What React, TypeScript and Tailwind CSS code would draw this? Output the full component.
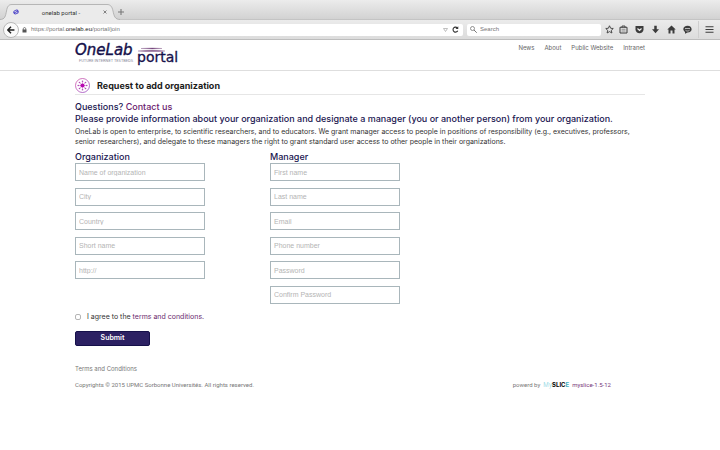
import type { ReactNode } from "react";

function Icon({ children, label }: { children: ReactNode; label: string }) {
  return (
    <button type="button" aria-label={label} className="flex shrink-0 items-center justify-center text-[#3c3c3c]">
      <svg viewBox="0 0 18 18" className="size-[9px]" fill="none" stroke="currentColor" strokeWidth="2">
        {children}
      </svg>
    </button>
  );
}

function BrowserChrome() {
  return (
    <div className="h-10 border-b border-[#bdbdbd] bg-[#e2e2e2] font-['Liberation_Sans',Arial,sans-serif] text-[6px] text-[#333]">
      <div className="flex h-5 items-end border-b border-[#c4c4c4] bg-linear-to-b from-[#ececec] to-[#d2d2d2]">
        <div className="relative -mb-px h-4 w-[120px]">
          <svg viewBox="0 0 120 16" className="absolute inset-0 h-4 w-[120px]">
            <path d="M0 15.5C5 15.5 5.500 12 6.500 7C7.300 2 9 .5 12 .5H107C110 .5 112 2 113 7C114 12 115 15.500 120 15.500V16H0Z" fill="#ebebeb" />
            <path d="M0 15.500C5 15.500 5.500 12 6.500 7C7.300 2 9 .5 12 .5H107C110 .5 112 2 113 7C114 12 115 15.500 120 15.500" fill="none" stroke="#a8a8a8" strokeWidth=".8" />
          </svg>
          <div className="relative flex h-4 items-center pr-[13px] pl-[13px]">
            <svg viewBox="0 0 12 12" className="size-[6px]" fill="none" stroke="#4b43c8" strokeWidth="2">
              <ellipse cx="6" cy="6" rx="4.500" ry="3.500" transform="rotate(-20 6 6)" />
              <path d="M2 8L10 4" />
            </svg>
            <span className="flex-1 text-center font-[Roboto,sans-serif]">onelab portal -</span>
            <button type="button" aria-label="Close tab">
              <svg viewBox="0 0 8 8" className="size-[4px]" stroke="#777" strokeWidth="1.800">
                <path d="M1 1L7 7M7 1L1 7" />
              </svg>
            </button>
          </div>
        </div>
        <button type="button" aria-label="New tab" className="-ml-0.5 mb-1">
          <svg viewBox="0 0 10 10" className="size-[6px]" stroke="#777" strokeWidth="1.800">
            <path d="M5 0V10M0 5H10" />
          </svg>
        </button>
      </div>
      <div className="flex h-[19px] items-center bg-linear-to-b from-[#ebebeb] to-[#dcdcdc] pr-[6px] pl-[3px]">
        <button type="button" aria-label="Back" className="relative z-10 flex size-4 shrink-0 items-center justify-center rounded-full border border-[#b8b8b8] bg-[#fafafa]">
          <svg viewBox="0 0 14 14" className="size-2" fill="none" stroke="#222" strokeWidth="2.500">
            <path d="M13 7H2M7 1.500L1.500 7L7 12.500" />
          </svg>
        </button>
        <div className="-ml-1 flex h-3 min-w-0 flex-1 items-center rounded-r-xs bg-white pr-1 pl-[7px]">
          <svg viewBox="0 0 10 12" className="h-[6px] w-[5px] shrink-0" fill="#555">
            <path d="M1 5H9V11H1Z" />
            <path d="M2.500 6V3.500C2.500 .3 7.500 .3 7.500 3.500V6" fill="none" stroke="#555" strokeWidth="1.500" />
          </svg>
          <div role="textbox" aria-label="Address" className="ml-1 flex-1 whitespace-nowrap text-[#777]">
            https://portal.<span className="text-[#222]">onelab.eu</span>/portal/join
          </div>
          <svg viewBox="0 0 10 8" className="h-1 w-[5px]" fill="none" stroke="#aaa" strokeWidth="1.500">
            <path d="M1 1H9L5 7Z" />
          </svg>
          <button type="button" aria-label="Reload" className="ml-1">
            <svg viewBox="0 0 14 14" className="size-[7px]" fill="none" stroke="#333" strokeWidth="2.200">
              <path d="M11.500 9.500A5 5 0 1 1 10.500 3.500" />
              <path d="M12.500 .5V6H7Z" fill="#333" stroke="none" />
            </svg>
          </button>
        </div>
        <div className="ml-1 flex h-3 w-[134px] shrink items-center rounded-xs bg-white pl-[3px]">
          <svg viewBox="0 0 14 14" className="size-[7px] shrink-0" fill="none" stroke="#777" strokeWidth="1.600">
            <circle cx="5" cy="5" r="4" />
            <path d="M8 8L13.500 13.500" strokeWidth="2" />
          </svg>
          <input aria-label="Search" placeholder="Search" className="ml-[3px] w-full min-w-0 outline-none placeholder:text-[#777]" />
        </div>
        <div className="ml-1 flex items-center gap-[7px]">
          <div className="flex gap-[5px]">
            <Icon label="Bookmark">
              <path d="M9 1.500L11.300 6.500L16.500 7L12.600 10.700L13.800 16L9 13.200L4.200 16L5.400 10.700L1.500 7L6.700 6.500Z" strokeWidth="1.800" />
            </Icon>
            <Icon label="Bookmarks list">
              <path d="M2 4.500H16V16H2Z" strokeWidth="2" />
              <path d="M6 5V2H12V5" strokeWidth="1.800" />
              <path d="M5 8.500H13M5 12H13" strokeWidth="1" />
            </Icon>
          </div>
          <Icon label="Pocket">
            <path d="M1 2H17V8.500C17 19 1 19 1 8.500Z" fill="currentColor" stroke="none" />
            <path d="M5 7L9 10.800L13 7" stroke="#eee" strokeWidth="2.400" />
          </Icon>
          <Icon label="Downloads">
            <path d="M6.500 1.500H11.500V8.500H16L9 16.500L2 8.500H6.500Z" fill="currentColor" stroke="none" />
          </Icon>
          <Icon label="Home">
            <path d="M9 1L17.500 9H15V17H11V11H7V17H3V9H.5Z" fill="currentColor" stroke="none" />
          </Icon>
          <Icon label="Chat">
            <path d="M9 1.500C20 1.500 20 15 9 15L4 17.500V14C-3 8 2 1.500 9 1.500Z" fill="currentColor" stroke="none" />
            <path d="M4 7H14M5 10.500C7 12.500 11 12.500 13 10.500" stroke="#ddd" strokeWidth="1.500" />
          </Icon>
          <div className="-ml-px border-l border-[#cfcfcf] py-1 pl-[6px]">
            <Icon label="Menu">
              <path d="M1 3.500H17M1 9H17M1 14.500H17" strokeWidth="2.200" />
            </Icon>
          </div>
        </div>
      </div>
    </div>
  );
}

function Logo() {
  return (
    <svg viewBox="0 0 106 27" className="h-[27px] w-[106px]" role="img" aria-label="OneLab portal">
      <text x="0" y="15" fontSize="15" fontStyle="italic" fill="#15104a" stroke="#15104a" strokeWidth=".4" fontFamily="DejaVu Sans, sans-serif">OneLab</text>
      <text x="4" y="22" fontSize="4" fill="#8a8a9a" fontFamily="Roboto, sans-serif">FUTURE INTERNET TESTBEDS</text>
      <text x="62" y="22" fontSize="14" fill="#15104a" stroke="#15104a" strokeWidth=".3" fontFamily="DejaVu Sans, sans-serif">portal</text>
      <path d="M66 8.500Q78 7.300 87 8.500Q78 9.300 66 8.500M63 11Q78 9.500 90 11Q78 12 63 11" fill="#76487f" stroke="#76487f" strokeWidth=".3" />
    </svg>
  );
}

function OrganizationIcon() {
  return (
    <svg viewBox="0 0 30 30" className="size-[15px]" fill="none">
      <defs>
        <linearGradient id="ring" x1="0" y1="0" x2="1" y2="1">
          <stop offset="0" stopColor="#d24aa0" />
          <stop offset="1" stopColor="#8a3ac0" />
        </linearGradient>
      </defs>
      <circle cx="15" cy="15" r="14" stroke="url(#ring)" strokeWidth="1.500" />
      <path d="M15 6V24M6 15H24M8.600 8.600L21.400 21.400M21.400 8.600L8.600 21.400" stroke="#c060c0" strokeWidth="1" />
      <circle cx="15" cy="15" r="4.200" fill="#b808b0" />
      <g fill="#b44ab8">
        <circle cx="15" cy="6.500" r="1.600" />
        <circle cx="15" cy="23.500" r="1.600" />
        <circle cx="6.500" cy="15" r="1.600" />
        <circle cx="23.500" cy="15" r="1.600" />
        <circle cx="9" cy="9" r="1.600" />
        <circle cx="21" cy="21" r="1.600" />
        <circle cx="21" cy="9" r="1.600" />
        <circle cx="9" cy="21" r="1.600" />
      </g>
    </svg>
  );
}

function Field({ label, type = "text" }: { label: string; type?: string }) {
  return (
    <input
      type={type}
      aria-label={label}
      placeholder={label}
      className="h-[18px] w-[130px] rounded-none border border-[#a9b6bb] bg-white px-[3px] font-['Liberation_Sans',Arial,sans-serif] text-[7px] text-[#333] outline-none placeholder:text-[#b4b4b4]"
    />
  );
}

const nav = ["News", "About", "Public Website", "Intranet"];
const organization = ["Name of organization", "City", "Country", "Short name", "http://"];
const manager = ["First name", "Last name", "Email", "Phone number", "Password", "Confirm Password"];

export default function App() {
  return (
    <div className="min-h-screen bg-white font-[Inter,Arial,sans-serif] text-[#333]">
      <BrowserChrome />
      <header className="border-b border-[#dedede]">
        <div className="mx-auto flex h-[30px] max-w-[570px] items-start justify-between">
          <a href="#home"><Logo /></a>
          <nav className="flex gap-[10px] pt-[3px] text-[6px] leading-[10px] text-[#666]">
            {nav.map((item) => <a key={item} href="#nav">{item}</a>)}
          </nav>
        </div>
      </header>
      <main className="mx-auto max-w-[570px] pt-[6px]">
        <h1 className="flex h-[18px] items-center gap-[7px] border-b border-[#e6e6e6] text-[9px] font-bold text-[#1c1c1c]">
          <OrganizationIcon />
          Request to add organization
        </h1>
        <div className="pt-[6px] text-[9px] leading-3 font-medium text-[#1a1650]">
          <p>Questions? <a href="#contact" className="text-[#6a1a6e]">Contact us</a></p>
          <p>Please provide information about your organization and designate a manager (you or another person) from your organization.</p>
        </div>
        <p className="pt-0.5 text-[7px] leading-[10px]">
          OneLab is open to enterprise, to scientific researchers, and to educators. We grant manager access to people in positions of responsibility (e.g., executives, professors, senior researchers), and delegate to these managers the right to grant standard user access to other people in their organizations.
        </p>
        <form onSubmit={(event) => event.preventDefault()}>
          <div className="grid grid-cols-[195px_195px] pt-1">
            <section>
              <h2 className="text-[9px] leading-3 font-medium text-[#1a1650]">Organization</h2>
              <div className="grid h-[147px] grid-rows-6">{organization.map((name) => <Field key={name} label={name} />)}</div>
            </section>
            <section>
              <h2 className="text-[9px] leading-3 font-medium text-[#1a1650]">Manager</h2>
              <div className="grid h-[147px] grid-rows-6">
                {manager.map((name) => <Field key={name} label={name} type={name.includes("Password") ? "password" : "text"} />)}
              </div>
            </section>
          </div>
          <div className="flex h-[14px] items-center gap-[6px] text-[7px]">
            <input id="agree" type="checkbox" className="size-[6px] appearance-none rounded-xs border border-[#b5b5b5] bg-white checked:bg-[#2b2162]" />
            <label htmlFor="agree">I agree to the <a href="#terms" className="text-[#6a2a6e]">terms and conditions.</a></label>
          </div>
          <button type="submit" className="mt-[7px] block h-[15px] w-[75px] rounded-xs border border-[#15104a] bg-[#2c2163] text-[7px] font-semibold text-white">Submit</button>
        </form>
        <footer className="pt-[18px] text-[6px] leading-[10px] text-[#777]">
          <a href="#terms" className="block">Terms and Conditions</a>
          <div className="flex justify-between pt-[6px] pr-[34px] font-[Roboto,sans-serif]">
            <p>Copyrights © 2015 UPMC Sorbonne Universités. All rights reserved.</p>
            <p className="flex gap-[3px]">
              powerd by
              <span className="font-[Inter,sans-serif]"><span className="text-[#9edbe6]">My</span><span className="font-bold text-black">SLIC</span><span className="font-bold text-[#3fb0c0]">E</span></span>
              <a href="#version" className="text-[#76367a]">myslice-1.5-12</a>
            </p>
          </div>
        </footer>
      </main>
    </div>
  );
}
